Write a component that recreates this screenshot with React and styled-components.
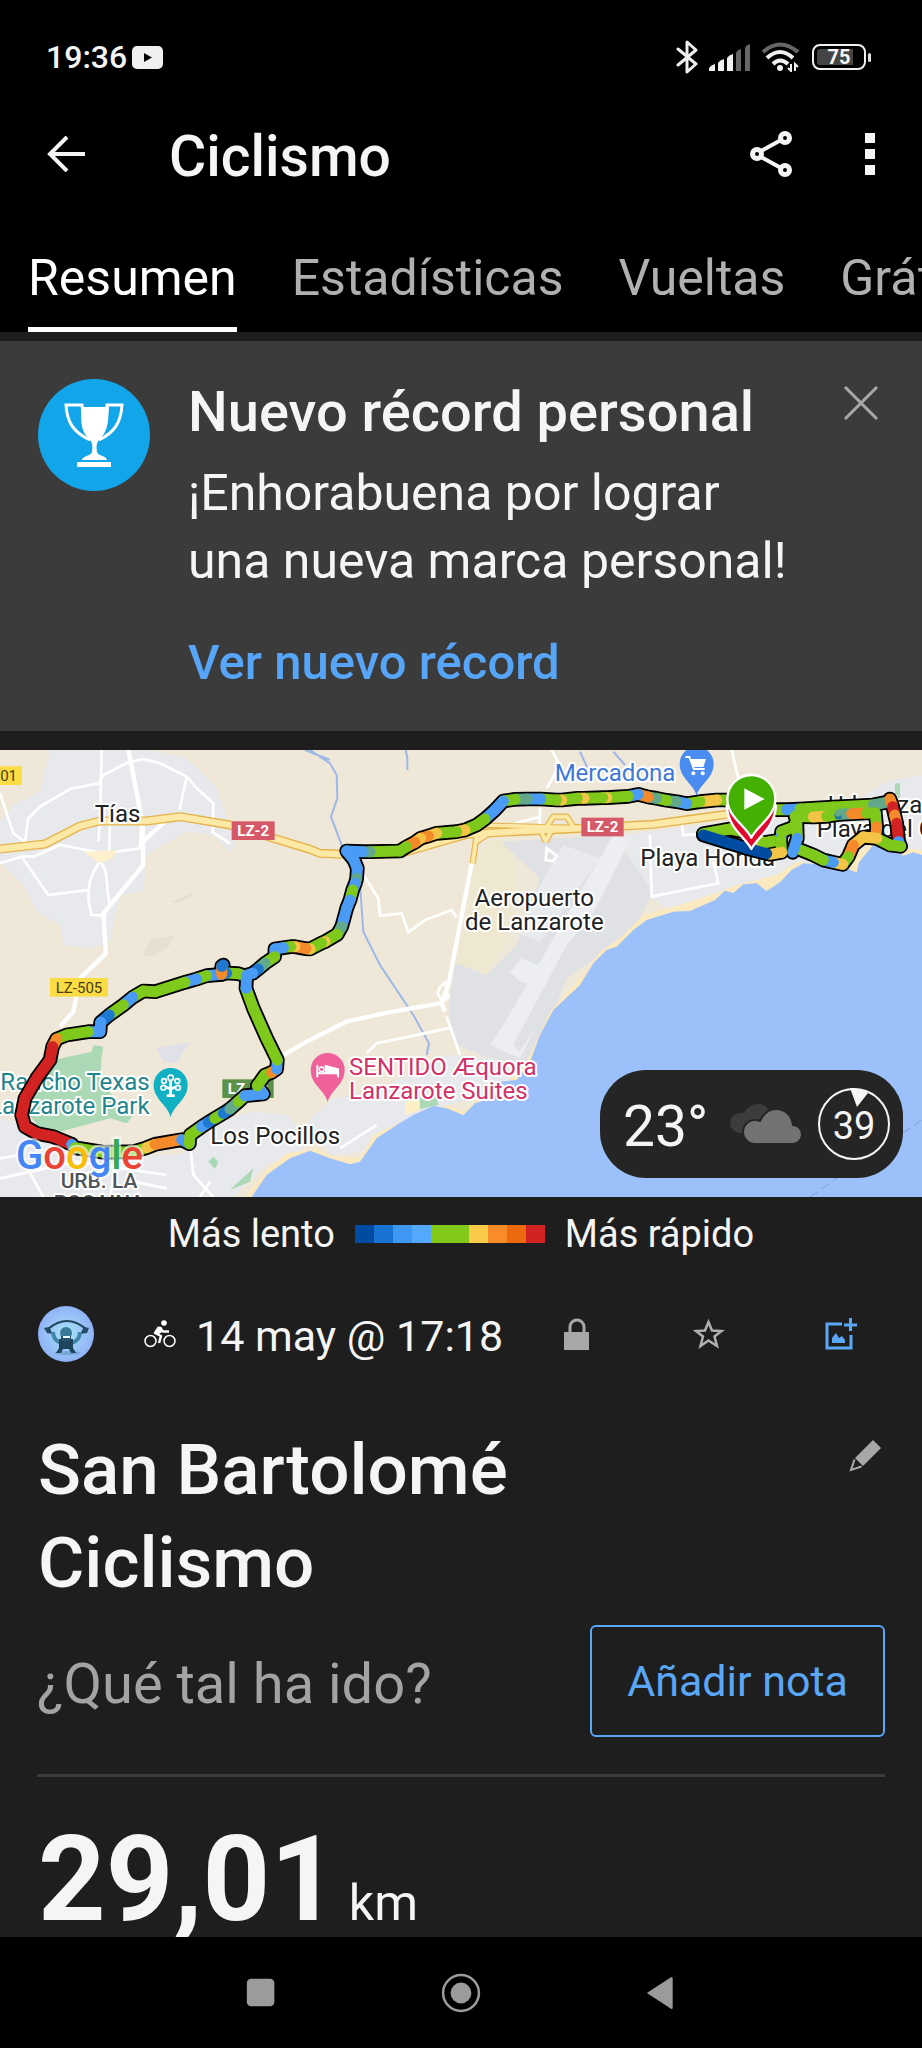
import React from "react";
import styled, { createGlobalStyle } from "styled-components";

const GlobalStyle = createGlobalStyle`
    * {
        box-sizing: border-box;
    }

    body {
        margin: 0;
        background: #000;
        color: #f5f5f5;
        font-family: Roboto, "Noto Sans", sans-serif;
    }

    h1, h2, p {
        margin: 0;
    }

    button {
        flex: none;
        padding: 0;
        border: 0;
        background: none;
        color: inherit;
        font-family: inherit;
        cursor: pointer;
    }

    svg {
        display: block;
    }
`;

const Screen = styled.div`
    display: flex;
    flex-direction: column;
    height: 100vh;
    overflow: hidden;
`;

const StatusBar = styled.div`
    display: flex;
    flex: none;
    align-items: center;
    justify-content: space-between;
    height: 114px;
    padding: 0 51px 0 46px;
    font-size: 32px;
    font-weight: 500;
`;

const StatusGroup = styled.div`
    display: flex;
    align-items: center;
    gap: ${props => props.$gap}px;
`;

const Battery = styled.div`
    display: flex;
    align-items: center;

    .cell {
        display: flex;
        align-items: center;
        justify-content: center;
        width: 54px;
        height: 26px;
        border: 2px solid #f0f0f0;
        border-radius: 8px;
        background: linear-gradient(90deg, #444 36px, #000 36px) content-box;
        padding: 3px;
        font-size: 20px;
        font-weight: 700;
        line-height: 20px;
    }

    .tip {
        width: 3px;
        height: 9px;
        margin-left: 2px;
        border-radius: 2px;
        background: #e0e0e0;
    }
`;

const AppBar = styled.header`
    display: flex;
    flex: none;
    align-items: center;
    height: 86px;
    padding: 0 42px 6px 47px;

    h1 {
        flex: 1;
        padding: 6px 0 0 84px;
        font-size: 57px;
        font-weight: 500;
        line-height: 66px;
    }

    .more {
        margin-left: 66px;
    }
`;

const Tabs = styled.nav`
    display: flex;
    flex: none;
    gap: 55px;
    padding-left: 28px;
    overflow: hidden;
`;

const Tab = styled.button`
    padding: 50px 0 21px;
    border-bottom: 5px solid ${props => (props.$active ? "#fff" : "transparent")};
    color: ${props => (props.$active ? "#fff" : "#b0b0b0")};
    font-size: 50px;
    line-height: 56px;
`;

const Content = styled.main`
    flex: 1;
    min-height: 0;
    overflow-y: auto;
    scrollbar-width: none;
    background: #1e1e1e;
`;

const Banner = styled.section`
    display: flex;
    align-items: flex-start;
    gap: 38px;
    margin: 9px 0 19px;
    padding: 38px 37px 34px 38px;
    background: #3b3b3b;

    .trophy {
        flex: none;
    }

    .close {
        padding-top: 7px;
    }
`;

const BannerText = styled.div`
    flex: 1;

    h2 {
        font-size: 56px;
        font-weight: 500;
        line-height: 66px;
    }

    p {
        margin: 14px 0 34px;
        font-size: 50px;
        line-height: 68px;
    }

    a {
        display: block;
        color: #56a5f8;
        font-size: 49px;
        font-weight: 500;
        line-height: 68px;
        text-decoration: none;
    }
`;

const MapPanel = styled.section`
    position: relative;
    height: 447px;
    overflow: hidden;

    > svg {
        width: 100%;
        height: 100%;
    }
`;

const Weather = styled.div`
    position: absolute;
    right: 19px;
    bottom: 19px;
    display: flex;
    align-items: center;
    width: 303px;
    height: 108px;
    padding: 0 12px 0 23px;
    border-radius: 46px;
    background: #252525;
    font-size: 57px;

    span {
        flex: 1;
        padding-top: 4px;
    }

    .wind {
        margin-left: 14px;
    }
`;

const Legend = styled.div`
    display: flex;
    align-items: center;
    justify-content: center;
    gap: 20px;
    height: 74px;
    font-size: 38px;

    .scale {
        display: flex;
    }
`;

const Swatch = styled.span`
    width: 19px;
    height: 18px;
    background: ${props => props.$color};
`;

const InfoRow = styled.div`
    display: flex;
    align-items: center;
    height: 56px;
    margin: 35px 0 61px;
    padding: 0 61px 0 38px;

    .bike {
        margin: 0 20px 0 50px;
    }

    time {
        flex: 1;
        padding-top: 4px;
        font-size: 43px;
        white-space: nowrap;
    }
`;

const IconButton = styled.button`
    display: flex;
    justify-content: center;
    width: 40px;
    margin-left: ${props => props.$gap || 0}px;
`;

const TitleRow = styled.div`
    display: flex;
    align-items: flex-start;
    justify-content: space-between;
    padding: 0 37px 0 38px;

    h2 {
        max-width: 600px;
        font-size: 71px;
        font-weight: 500;
        line-height: 93px;
    }

    button {
        margin-top: 16px;
    }
`;

const NoteRow = styled.div`
    display: flex;
    align-items: center;
    justify-content: space-between;
    margin: 16px 37px 0;
    padding-bottom: 37px;
    border-bottom: 3px solid #3b3b3b;

    p {
        padding-top: 6px;
        color: #a3a3a3;
        font-size: 56px;
    }

    button {
        height: 112px;
        padding: 0 35px;
        border: 2px solid #5aa7f8;
        border-radius: 6px;
        color: #5aa7f8;
        font-size: 43px;
    }
`;

const Distance = styled.p`
    display: flex;
    align-items: baseline;
    gap: 11px;
    padding: 32px 38px 0;
    font-size: 50px;

    strong {
        font-size: 118px;
        line-height: 142px;
    }
`;

const SystemNav = styled.nav`
    display: flex;
    flex: none;
    align-items: center;
    justify-content: center;
    gap: 160px;
    height: 111px;
    background: #000;
`;

const TABS = ["Resumen", "Estadísticas", "Vueltas", "Gráficas"];

const SCALE = [
    "#004ca3",
    "#1873d2",
    "#3d97f3",
    "#54a8ff",
    "#82c91a",
    "#82c91a",
    "#f8cc4a",
    "#f98c28",
    "#ec690e",
    "#d32222"
];

const SPEED = {
    d: "#004ca3",
    m: "#1f78d0",
    b: "#4a9bf5",
    t: "#62a98c",
    g: "#7fc81c",
    y: "#f3c445",
    o: "#f58a2a",
    r: "#d32222"
};

// each leg is a list of x,y,speed; the speed colours the stretch that ends there
const LEGS = [
    "2190,165 2150,165,g 2100,170,y 2060,176,g 2030,170,b 2000,166,t 1970,160,g 1945,156,t 1915,148,o 1885,154,b 1820,158,g 1808,158,y 1752,160,g 1732,160,y 1685,165,g 1670,165,y 1622,162,g 1582,162,b 1545,163,t 1510,168,g 1485,195,b 1455,222,b 1430,240,g 1395,255,g 1370,260,y 1310,265,g 1285,273,y 1262,280,o 1245,292,y 1220,305,o 1200,318,g 1110,320,g 1088,320,t 1040,318,b 1062,345,b 1072,370,b 1070,400,b 1066,415,t 1058,435,b 1050,465,g 1040,490,b 1032,520,b 1025,545,b 1012,568,t 975,590,g 965,594,y 930,612,g 918,611,y 885,605,o 872,605,y 850,608,g 825,612,b 824,635,b 795,655,g 775,672,t 758,685,m 735,692,b",
    "735,692 715,686,t 680,684,g 665,688,m 620,692,b 590,702,g 555,712,b 465,740,g 430,738,g 398,757,g 370,780,b 328,810,g 302,832,m 300,860,b 265,860,b 200,870,g 170,882,g 158,905,o 150,945,r 110,1000,r 75,1060,r 65,1110,r 75,1145,r 110,1165,r 160,1175,r 215,1198,r",
    "665,688 665,664,o 670,660,m",
    "215,1198 225,1208,b 310,1222,g 400,1220,g 440,1208,g 465,1198,y 545,1184,o 568,1196,b 570,1170,g 605,1145,g 625,1132,b 645,1120,m 670,1105,g 690,1092,m 715,1070,t 735,1052,g 790,1047,b 772,1022,b 795,990,g 815,982,g 830,972,o 832,945,b 800,880,g 760,790,g 738,730,g 740,692,b",
    "2330,194 2360,194,g 2400,192,b 2500,186,g 2620,180,g 2668,170,t",
    "2385,214 2440,216,g 2480,214,y 2520,208,g 2555,206,t 2600,204,o 2626,204,g 2630,245,g 2628,268,o",
    "2670,162 2678,185,o 2684,210,r 2690,235,o 2696,290,r 2702,304,b 2670,300,g 2630,280,g 2590,276,y 2560,300,y 2545,335,o 2528,358,g 2500,352,y 2470,345,b 2440,330,g 2395,312,g",
    "2110,266 2190,252,g 2240,262,g 2290,294,y 2310,290,g 2342,285,g 2345,260,b 2385,245,g 2390,214,g 2392,280,g 2378,322,b",
    "2342,285 2345,322,g 2310,328,y",
    "2110,270 2180,292,d 2240,310,d 2300,326,d"
].map(leg =>
    leg.split(" ").map(item => {
        const [x, y, speed] = item.split(",");
        return { x, y, speed };
    })
);

const MINOR_ROADS = [
    "M0,145 40,265 75,290 85,220 120,185 210,132 295,115 310,90 385,52 430,42 480,55 560,95 590,130 640,175 638,262 690,295",
    "M305,15 300,220 295,290M560,95 538,195M330,230 328,320M0,355 65,335 100,335 180,300 310,325 420,310 425,200M65,335 145,450 265,435M300,350C260,400 260,460 275,510L320,512M300,350C330,380 315,430 330,480",
    "M1090,390 1135,460 1140,512 1205,505 1225,562 1275,525 1355,495 1370,518M1355,848 1130,895 1100,925M1340,815 1380,930M1655,15 1680,60 1640,130M2195,15 2215,100M1950,270 1955,455 2155,415 2140,350M2045,230 2050,270 2130,265",
    "M570,1200 580,1290 640,1356M0,1240 60,1230 130,1356M0,1300 230,1250 500,1290M350,1250 330,1356M500,1330 400,1310M630,1310 600,1356M1130,1140 1020,1210",
    "M1620,190 1618,255M1545,235 1620,215"
];

const LABEL = {
    fontFamily: "Roboto, sans-serif",
    fontSize: 72,
    stroke: "#fff",
    strokeWidth: 12,
    strokeLinejoin: "round",
    paintOrder: "stroke"
};

function Leg({ points }) {
    return points.slice(1).map((p, i) => (
        <line
            key={i}
            x1={points[i].x}
            y1={points[i].y}
            x2={p.x}
            y2={p.y}
            stroke={SPEED[p.speed]}
        />
    ));
}

function Pin({ x, y, color, children }) {
    return (
        <g transform={`translate(${x} ${y})`}>
            <path
                d="M0 97C-8 60-51 45-51 0A51 51 0 0 1 51 0C51 45 8 60 0 97Z"
                fill={color}
            />
            {children}
        </g>
    );
}

function RoadSign({ x, y, width, color, children, ...text }) {
    return (
        <g>
            <rect x={x} y={y} width={width} height="56" fill={color} />
            <text
                x={x + width / 2}
                y={y + 44}
                textAnchor="middle"
                fontFamily="Roboto, sans-serif"
                fontSize="45"
                {...text}
            >
                {children}
            </text>
        </g>
    );
}

function RouteMap() {
    return (
        <svg
            viewBox="0 15 2766 1341"
            preserveAspectRatio="xMidYMid slice"
            role="img"
            aria-label="Mapa del recorrido"
        >
            <rect y="15" width="2766" height="1341" fill="#efe8d8" />
            <g fill="#e7e9ec">
                <path d="M150,15 120,140 40,180 0,230V350L70,420 110,500 180,540 190,600 270,610 330,590 360,450 430,440 440,330 560,260 640,270 690,320 710,300 650,130 560,40 450,15Z" />
                <path d="M0,1120 50,1130 110,1170 230,1210 450,1230 540,1230 640,1130 760,1100 860,1110 930,1180 900,1220 800,1260 700,1356H0Z" />
                <path d="M920,1130 1000,1060 1110,1040 1230,990 1340,930 1480,940 1540,1020 1430,1060 1340,1080 1200,1140 1100,1220 990,1230Z" />
                <path d="M1870,270 2100,240 2500,210 2660,110 2766,90V340L2500,380 2300,440 2000,490 1900,420Z" />
            </g>
            <path
                d="M1500,290 1840,270 1960,440 1900,560 1700,700 1600,960 1470,940 1370,900 1345,800 1365,655 1460,690 1550,600 1620,400Z"
                fill="#dfe1e5"
            />
            <path
                d="M1365,655 1400,520 1420,360 1470,285 1500,285C1560,350 1550,440 1540,520L1505,610 1460,685Z"
                fill="#efe8d0"
            />
            <g fill="#eceef1">
                <path d="M1690,300 1800,340 1620,590 1540,560Z" opacity=".7" />
                <path d="M1840,270 1890,285 1560,940 1470,900 1510,840Z" />
                <path d="M1530,680 1565,640 1680,690 1640,730 1560,710Z" />
            </g>
            <path d="M1700,600 1770,520 1610,840 1560,920 1540,900Z" fill="#dfe1e5" />
            <g fill="#abd8b5">
                <path d="M160,945 275,920 280,900 310,905 305,935 300,1000 370,1100 400,1110 380,1135 330,1120 180,1160 120,1150 80,1100Z" />
                <path d="M1260,1060 1310,1050 1315,1080 1260,1092ZM625,1250 640,1235 655,1250 645,1272ZM690,1335 760,1270 750,1310ZM2685,115H2700V160H2685Z" />
            </g>
            <path d="M470,910 570,890 530,955 490,950Z" fill="#dfe0e8" />
            <g fill="#e7dfcf">
                <path d="M430,630 450,585 520,570 510,600 460,635ZM515,470 580,442 570,458 530,475Z" />
            </g>
            <path
                d="M735,1356 800,1275 860,1225 950,1212 1000,1235 1080,1240 1120,1170 1250,1110 1340,1080 1390,1100 1440,1060 1500,1040 1580,950 1650,800 1740,700 1800,620 1860,580 1930,510 2040,480 2160,440 2210,420 2330,390 2390,350 2500,360 2610,300 2766,315V1356Z"
                fill="#fbe9bf"
            />
            <path
                d="M755,1356 800,1290 870,1240 930,1217 990,1240 1050,1258 1080,1250 1130,1180 1190,1140 1240,1110 1300,1083 1340,1090 1390,1110 1425,1075 1480,1058 1500,1010 1550,1005 1590,950 1620,870 1660,795 1740,720 1780,655 1820,615 1850,605 1900,555 1940,525 2020,500 2070,498 2145,465 2175,437 2200,444 2230,418 2270,415 2300,438 2340,412 2375,375 2410,355 2490,360 2540,370 2570,383 2577,352 2620,300 2660,300 2710,332 2740,322 2766,330V1356Z"
                fill="#9cc0fa"
            />
            <path d="M1215,1060 1255,1060 1260,1095 1215,1110Z" fill="#fdf0c4" />
            <g fill="none" stroke="#9db8e8" strokeWidth="6">
                <path d="M930,15 990,55 1010,90 1012,160 993,215 1025,300 1080,420 1090,560 1140,660 1240,810 1287,895 1280,930M915,15 990,45M1217,15 1222,40 1222,75M1740,20 1765,75M1840,20 1875,60" />
                <path
                    d="M2430,1356 2766,1125"
                    stroke="#7f9fd8"
                    strokeDasharray="28 14"
                    strokeWidth="3"
                />
            </g>
            <g fill="none" stroke="#fff" strokeWidth="8">
                {MINOR_ROADS.map(d => (
                    <path key={d} d={d} />
                ))}
            </g>
            <g fill="none" stroke="#fff" strokeWidth="13">
                <path d="M385,15 402,100 428,240 430,360 310,505 318,625 240,700 220,800 180,845M428,290 500,225M850,930 920,890 1040,830 1150,805 1320,775 1345,755M1415,355 1345,720 1325,775 1335,800" />
                <path d="M1320,725 1335,712 1345,755 1325,765 1313,745ZM1640,310 1670,332 1660,348 1637,345Z" strokeWidth="8" />
            </g>
            <g fill="none" strokeLinejoin="round">
                <g stroke="#e6b34a" strokeWidth="27">
                    <path d="M0,312 135,297 240,243 300,228 440,228 540,215 690,240 930,313 960,325 1030,328 1200,325 1400,268 1500,262 1780,248 1960,238 2180,208" />
                    <path d="M1440,240 1740,248 1900,240" strokeWidth="16" />
                    <path d="M1418,355 1430,270 1400,255M1430,290 1470,262M1637,290 1622,255M1637,290 1655,255M1640,245 1660,215 1700,215 1720,245" strokeWidth="19" />
                </g>
                <g stroke="#fce9a8" strokeWidth="19">
                    <path d="M0,312 135,297 240,243 300,228 440,228 540,215 690,240 930,313 960,325 1030,328 1200,325 1400,268 1500,262 1780,248 1960,238 2180,208" />
                    <path d="M1440,240 1740,248 1900,240" strokeWidth="10" />
                    <path d="M1418,355 1430,270 1400,255M1430,290 1470,262M1637,290 1622,255M1637,290 1655,255M1640,245 1660,215 1700,215 1720,245" strokeWidth="12" />
                </g>
            </g>
            <path d="M250,320 350,315 340,340 300,355Z" fill="#fcf0cf" />

            <g style={LABEL} fill="#202124">
                <text x="284" y="231">Tías</text>
                <text x="1603" y="483" textAnchor="middle">Aeropuerto</text>
                <text x="1603" y="555" textAnchor="middle">de Lanzarote</text>
                <text x="1921" y="362">Playa Honda</text>
                <text x="631" y="1196">Los Pocillos</text>
                <text x="2484" y="203">Urbanizac</text>
                <text x="2450" y="276">Playa del Ca</text>
                <g fill="#1f858d">
                    <text x="449" y="1034" textAnchor="end">Rancho Texas</text>
                    <text x="449" y="1107" textAnchor="end">Lanzarote Park</text>
                </g>
                <g fill="#cf3269">
                    <text x="1047" y="989">SENTIDO Æquora</text>
                    <text x="1047" y="1061">Lanzarote Suites</text>
                </g>
                <text x="1664" y="107" fill="#3d77d8">Mercadona</text>
                <g fill="#505357" textAnchor="middle" style={{ fontSize: 63, fontWeight: 500 }}>
                    <text x="297" y="1328">URB. LA</text>
                    <text x="297" y="1394">ROCAINA</text>
                </g>
            </g>

            <RoadSign x={-60} y={64} width={126} color="#fbdc45" fill="#4a3c10" textAnchor="end" dx="48">
                LZ-501
            </RoadSign>
            <RoadSign x={150} y={699} width={174} color="#fbdc45" fill="#4a3c10">
                LZ-505
            </RoadSign>
            <RoadSign x={695} y={229} width={129} color="#d6596a" fill="#fff" fontWeight="700">
                LZ-2
            </RoadSign>
            <RoadSign x={1744} y={218} width={127} color="#d6596a" fill="#fff" fontWeight="700">
                LZ-2
            </RoadSign>
            <RoadSign x={667} y={1003} width={154} color="#5b9148" fill="#fff" fontWeight="700">
                LZ-40
            </RoadSign>

            <Pin x={512} y={1020} color="#12b0c3">
                <g fill="none" stroke="#fff" strokeWidth="5">
                    <circle cx="0" cy="-22" r="8" />
                    <circle cx="-20" cy="-12" r="7" />
                    <circle cx="20" cy="-12" r="7" />
                    <circle cx="-22" cy="8" r="7" />
                    <circle cx="22" cy="8" r="7" />
                    <path d="M-12 32H12M0 30V-12M-15 6 0 12 15 6" strokeWidth="8" />
                </g>
            </Pin>
            <Pin x={983} y={975} color="#f0609a">
                <path
                    d="M-31-14V22M31 22V-2L-6-12V8M-31 10H31"
                    fill="none"
                    stroke="#fff"
                    strokeWidth="6"
                />
                <path d="M-6-12 31-2V10H-6Z" fill="#fff" />
                <circle cx="-18" cy="-2" r="7" fill="none" stroke="#fff" strokeWidth="4" />
            </Pin>
            <Pin x={2090} y={56} color="#4a8cf0">
                <path d="M-34-20H-22L-8 16H24" fill="none" stroke="#fff" strokeWidth="6" />
                <path d="M-20-14H28L20 10H-10Z" fill="#fff" />
                <circle cx="-10" cy="29" r="6" fill="#fff" />
                <circle cx="18" cy="29" r="6" fill="#fff" />
            </Pin>

            <g fill="none" stroke="#000" strokeWidth="44" strokeLinejoin="round" strokeLinecap="round">
                {LEGS.map((points, i) => (
                    <polyline key={i} points={points.map(p => `${p.x},${p.y}`).join(" ")} />
                ))}
            </g>
            <g strokeWidth="33" strokeLinecap="round">
                {LEGS.map((points, i) => (
                    <Leg key={i} points={points} />
                ))}
            </g>
            <path d="M2500,205q14,18 24,4v14h-16z" fill="#1f78a0" />

            <g stroke="#fff" strokeWidth="7" strokeLinejoin="round">
                <path
                    d="M2254,312C2235,275 2184,250 2180,182H2328C2324,250 2273,275 2254,312Z"
                    fill="#e2092f"
                />
                <path
                    d="M2254,278C2235,240 2182,215 2182,162A72,72 0 0 1 2326,162C2326,215 2273,240 2254,278Z"
                    fill="#43b002"
                />
            </g>
            <path d="M2233,130V194L2294,162Z" fill="#fff" />

            <text
                x="48"
                y="1272"
                fontFamily="Roboto, sans-serif"
                fontSize="120"
                fontWeight="500"
                stroke="#fff"
                strokeOpacity=".6"
                strokeWidth="14"
                paintOrder="stroke"
            >
                <tspan fill="#4285f4">G</tspan>
                <tspan fill="#ea4335">o</tspan>
                <tspan fill="#fbbc05">o</tspan>
                <tspan fill="#4285f4">g</tspan>
                <tspan fill="#34a853">l</tspan>
                <tspan fill="#ea4335">e</tspan>
            </text>
        </svg>
    );
}

function StatusIcons() {
    return (
        <StatusGroup $gap={11}>
            <svg width="22" height="34" viewBox="0 0 22 34" fill="none" stroke="#f0f0f0" strokeWidth="3" strokeLinecap="round" strokeLinejoin="round">
                <path d="M2 9 20 24 11 32V2L20 10 2 25" />
            </svg>
            <svg width="41" height="28" viewBox="0 0 41 28">
                <g fill="#f0f0f0">
                    <path d="M0 28V25Q2 22 6 21V28ZM9 28V20Q11 17 15 16V28ZM18 28V15Q20 12 24 11V28Z" />
                </g>
                <path d="M27 28V10Q28 7 32 6V28ZM36 28V5Q37 2 41 1V28Z" fill="#666" />
            </svg>
            <svg width="40" height="30" viewBox="0 0 40 30" fill="none" strokeWidth="4">
                <path d="M2 10Q19-5 37 10" stroke="#666" />
                <path d="M6 16Q19 4 32 16M12 22Q19 15 27 22" stroke="#f0f0f0" />
                <circle cx="19" cy="26" r="3" fill="#f0f0f0" />
                <path d="M30 22V29L27 26M34 29V22L37 25" stroke="#f0f0f0" strokeWidth="2" />
            </svg>
            <Battery>
                <div className="cell">75</div>
                <div className="tip" />
            </Battery>
        </StatusGroup>
    );
}

function Trophy() {
    return (
        <svg className="trophy" width="112" height="112" viewBox="0 0 112 112">
            <circle cx="56" cy="56" r="56" fill="#12a5e9" />
            <path d="M43 28H71C70 45 70 52 61 61C59 64 58 66 59 73C60 77 69 77 69 81H44C44 77 53 77 54 73C55 66 54 64 52 61C43 52 43 45 43 28ZM39 83H73V88H39Z" fill="#fff" />
            <path d="M45 36 44 26H28C29 43 35 53 52 61M68 36 69 26H84C83 43 77 53 61 61" fill="none" stroke="#fff" strokeWidth="3" />
        </svg>
    );
}

function Avatar() {
    return (
        <svg width="56" height="56" viewBox="0 0 56 56" role="img" aria-label="Perfil">
            <defs>
                <radialGradient id="sky">
                    <stop offset="0" stopColor="#a9e4f8" />
                    <stop offset="1" stopColor="#8fb2f6" />
                </radialGradient>
            </defs>
            <circle cx="28" cy="28" r="28" fill="url(#sky)" />
            <ellipse cx="29" cy="47" rx="13" ry="2" fill="#79a8d8" />
            <path d="M10 23Q29 7 48 23" fill="none" stroke="#22455e" strokeWidth="2" />
            <path d="M6 22 11 21 15 28 9 27ZM51 22 46 21 42 28 49 27Z" fill="#204a66" />
            <path d="M15 26Q15 34 23 37M42 26Q42 34 34 37" fill="none" stroke="#3f86a8" strokeWidth="4" />
            <path d="M21 33H35V42L38 47H33L31 43H25L23 47H18L21 42Z" fill="#1e435c" />
            <circle cx="28" cy="27" r="6" fill="#3a7897" />
            <path d="M23 30H33V34Q28 37 23 34Z" fill="#28536e" />
            <path d="M25 30H32V32H25Z" fill="#e8f8ff" />
        </svg>
    );
}

export default function App() {
    return (
        <Screen>
            <GlobalStyle />
            <StatusBar>
                <StatusGroup $gap={5}>
                    <span>19:36</span>
                    <svg width="31" height="23" viewBox="0 0 31 23">
                        <rect width="31" height="23" rx="5" fill="#f0f0f0" />
                        <path d="M12 7V16L20 11.5Z" fill="#000" />
                    </svg>
                </StatusGroup>
                <StatusIcons />
            </StatusBar>

            <AppBar>
                <button aria-label="Atrás">
                    <svg width="38" height="36" viewBox="0 0 38 36" fill="none" stroke="#f5f5f5" strokeWidth="4">
                        <path d="M38 18H3M20 1 3 18 20 35" />
                    </svg>
                </button>
                <h1>Ciclismo</h1>
                <button aria-label="Compartir">
                    <svg width="44" height="48" viewBox="0 0 44 48" fill="none" stroke="#f5f5f5" strokeWidth="5">
                        <circle cx="7" cy="24" r="4.5" />
                        <circle cx="35" cy="8" r="4.5" />
                        <circle cx="35" cy="40" r="4.5" />
                        <path d="M11 21 31 10M11 27 31 38" strokeWidth="4" />
                    </svg>
                </button>
                <button className="more" aria-label="Más opciones">
                    <svg width="20" height="44" viewBox="0 0 20 44" fill="#f5f5f5">
                        <path d="M5 1H15V11H5ZM5 17H15V27H5ZM5 33H15V43H5Z" />
                    </svg>
                </button>
            </AppBar>

            <Tabs>
                {TABS.map((name, i) => (
                    <Tab key={name} $active={i === 0}>
                        {name}
                    </Tab>
                ))}
            </Tabs>

            <Content>
                <Banner>
                    <Trophy />
                    <BannerText>
                        <h2>Nuevo récord personal</h2>
                        <p>¡Enhorabuena por lograr una nueva marca personal!</p>
                        <a href="#record">Ver nuevo récord</a>
                    </BannerText>
                    <button className="close" aria-label="Cerrar">
                        <svg width="48" height="34" viewBox="0 0 48 34" stroke="#a8a8a8" strokeWidth="3">
                            <path d="M8 1 40 33M40 1 8 33" />
                        </svg>
                    </button>
                </Banner>

                <MapPanel>
                    <RouteMap />
                    <Weather>
                        <span>23°</span>
                        <svg width="74" height="42" viewBox="0 0 74 42">
                            <path d="M11 30A10 10 0 0 1 11 10Q13 9 15 10Q24-4 38 4L44 30Z" fill="#3c3c3c" />
                            <path d="M26 41A12 12 0 0 1 26 17Q29 17 31 18Q37 5 49 6Q62 8 64 22A9.500 9.500 0 0 1 63 41Z" fill="#727272" stroke="#252525" strokeWidth="2" />
                        </svg>
                        <svg className="wind" width="74" height="74" viewBox="0 0 74 74" role="img" aria-label="Viento 39">
                            <circle cx="37" cy="37" r="35" fill="none" stroke="#f5f5f5" strokeWidth="2" />
                            <path d="M33 1Q43 1 51 6L40 20Z" fill="#f5f5f5" />
                            <text x="37" y="52" textAnchor="middle" fontFamily="Roboto, sans-serif" fontSize="38" fill="#f5f5f5">
                                39
                            </text>
                        </svg>
                    </Weather>
                </MapPanel>

                <Legend>
                    <span>Más lento</span>
                    <span className="scale">
                        {SCALE.map((color, i) => (
                            <Swatch key={i} $color={color} />
                        ))}
                    </span>
                    <span>Más rápido</span>
                </Legend>

                <InfoRow>
                    <Avatar />
                    <svg className="bike" width="32" height="28" viewBox="0 0 32 28" fill="none" stroke="#fff">
                        <circle cx="6.500" cy="21" r="5.500" strokeWidth="1.500" />
                        <circle cx="25.500" cy="21" r="5.500" strokeWidth="1.500" />
                        <circle cx="20" cy="3" r="2.800" fill="#fff" stroke="none" />
                        <path d="M15 7 11 13 17 16 15 23M15 7 19 11.500H25" strokeWidth="2.500" strokeLinejoin="round" />
                        <path d="M12 12 17 7 19 11 14 14Z" fill="#fff" />
                    </svg>
                    <time>14 may @ 17:18</time>
                    <IconButton aria-label="Privacidad">
                        <svg width="26" height="32" viewBox="0 0 26 32">
                            <path d="M6 15V9A7 7 0 0 1 20 9V15" fill="none" stroke="#a8a8a8" strokeWidth="3" />
                            <rect x="0" y="14" width="25" height="18" fill="#a8a8a8" />
                        </svg>
                    </IconButton>
                    <IconButton $gap={92} aria-label="Favorito">
                        <svg width="32" height="30" viewBox="0 0 32 30" fill="none" stroke="#b0b0b0" strokeWidth="2.500">
                            <path d="M15.500 3 19 11.500 28.500 12 21.500 17.500 24 27 15.500 21.500 7.500 27 10 17.500 3 12 12 11.500Z" />
                        </svg>
                    </IconButton>
                    <IconButton $gap={92} aria-label="Añadir foto">
                        <svg width="32" height="36" viewBox="0 0 32 36" fill="none" stroke="#5aa7f8" strokeWidth="3">
                            <path d="M17 8H2V32H26V19M19 9H32M25.500 2V15" />
                            <path d="M7 27V22L11 17 14 22 17 20 20 24V27Z" fill="#5aa7f8" stroke="none" />
                        </svg>
                    </IconButton>
                </InfoRow>

                <TitleRow>
                    <h2>San Bartolomé Ciclismo</h2>
                    <button aria-label="Editar nombre">
                        <svg width="36" height="34" viewBox="0 0 36 34">
                            <path d="M24 1 32 9 14 27 6 19Z" fill="#a8a8a8" />
                            <path d="M5.500 20.500 2 31 12.500 27.500" fill="none" stroke="#a8a8a8" strokeWidth="2" />
                        </svg>
                    </button>
                </TitleRow>

                <NoteRow>
                    <p>¿Qué tal ha ido?</p>
                    <button>Añadir nota</button>
                </NoteRow>

                <Distance>
                    <strong>29,01</strong>
                    <span>km</span>
                </Distance>
            </Content>

            <SystemNav>
                <IconButton aria-label="Recientes">
                    <svg width="48" height="48" viewBox="0 0 48 48">
                        <rect x="7" y="7" width="33" height="33" rx="5" fill="#9b9b9b" />
                    </svg>
                </IconButton>
                <IconButton aria-label="Inicio">
                    <svg width="48" height="48" viewBox="0 0 48 48">
                        <circle cx="24" cy="24" r="21.500" fill="none" stroke="#9b9b9b" strokeWidth="3" />
                        <circle cx="24" cy="24" r="12.500" fill="#9b9b9b" />
                    </svg>
                </IconButton>
                <IconButton aria-label="Volver">
                    <svg width="48" height="48" viewBox="0 0 48 48">
                        <path d="M7 24 36 5Q38 4 38 7V41Q38 44 36 43Z" fill="#9b9b9b" />
                    </svg>
                </IconButton>
            </SystemNav>
        </Screen>
    );
}
